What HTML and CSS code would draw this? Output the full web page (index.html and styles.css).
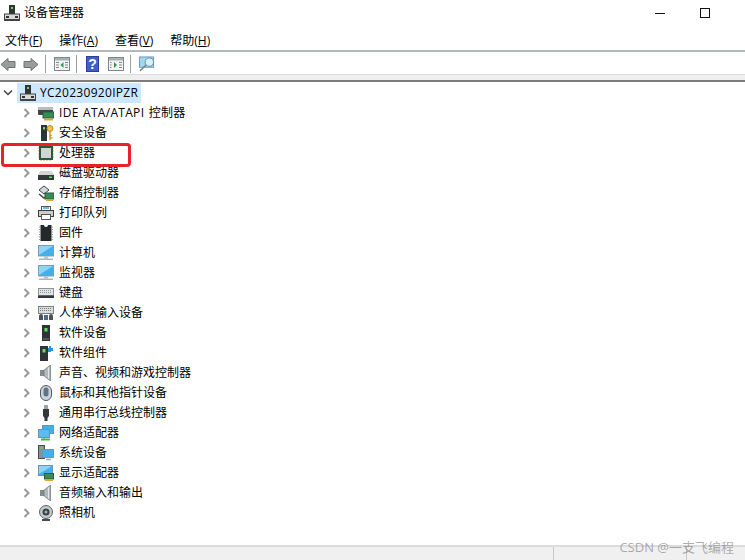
FILE: index.html
```html
<!DOCTYPE html>
<html lang="zh-CN">
<head>
<meta charset="utf-8">
<title>设备管理器</title>
<link rel="stylesheet" href="styles.css">
</head>
<body>
<svg class="defs" width="0" height="0">
  <defs>
    <symbol id="chev" viewBox="0 0 8 10"><path d="M1.500 1l4 4-4 4" fill="none" stroke="#9a9a9a" stroke-width="2"/></symbol>
    <symbol id="pc" viewBox="0 0 16 16"><rect x="5" y="0" width="6" height="9" fill="#2f3438"/><rect x="7" y="2" width="2" height="2" fill="#5fe05f"/><rect x="0.500" y="9" width="15" height="5.500" fill="#d8d8d8" stroke="#444"/><rect x="2" y="11" width="3" height="2" fill="#333"/><rect x="11" y="11" width="3" height="2" fill="#333"/><rect x="0" y="14.500" width="16" height="1.500" fill="#444"/></symbol>
    <symbol id="monitor" viewBox="0 0 16 16"><rect x="0.500" y="0.500" width="15" height="10.500" fill="#3fb1ee" stroke="#7d9db3"/><path d="M1 1h14L1 10z" fill="#8ed4f7"/><rect x="6" y="11" width="4" height="2.500" fill="#b9c4cc"/><rect x="1" y="13.500" width="14" height="1.500" fill="#aab5bd"/></symbol>
    <symbol id="speaker" viewBox="0 0 16 16"><rect x="2" y="5" width="5" height="6" fill="#858b8f"/><path d="M6 5L12.500 0v16L6 11z" fill="#b3b8bb" stroke="#6f757a" stroke-width=".7"/><path d="M10.500 2.500v11" stroke="#e4e6e7"/></symbol>
    <symbol id="tower" viewBox="0 0 16 16"><rect x="4" y="0" width="8" height="16" fill="#2e3337"/><rect x="6.500" y="3" width="3" height="3.500" fill="#5fe05f"/><rect x="5" y="13" width="6" height="2" fill="#555"/></symbol>
  </defs>
</svg>

<div class="window">
  <header class="titlebar">
    <svg class="icon"><use href="#pc"/></svg>
    <span class="title">设备管理器</span>
    <div class="winctl">
      <span class="minimize"></span>
      <span class="maximize"></span>
    </div>
  </header>

  <nav class="menubar">
    <span>文件(<u>F</u>)</span>
    <span>操作(<u>A</u>)</span>
    <span>查看(<u>V</u>)</span>
    <span>帮助(<u>H</u>)</span>
  </nav>

  <div class="toolbar">
    <svg class="tool arrow" viewBox="0 0 16 14"><path d="M8 1L1 7l7 6V10h7V4H8z" fill="#9b9d9d" stroke="#6f7272"/></svg>
    <svg class="tool arrow forward" viewBox="0 0 16 14"><path d="M8 1l7 6-7 6V10H1V4h7z" fill="#9b9d9d" stroke="#6f7272"/></svg>
    <span class="sep"></span>
    <svg class="tool" viewBox="0 0 16 14"><rect x=".5" y=".5" width="15" height="13" fill="#f4f4f4" stroke="#7d878e"/><rect x="1" y="1" width="14" height="2.500" fill="#a7b0b6"/><path d="M2 5.500h3M2 8h3M2 10.500h3M11 5.500h3M11 8h3M11 10.500h3" stroke="#7d878e"/><path d="M9.500 5v6l-3-3z" fill="#2d9a3e"/></svg>
    <span class="sep"></span>
    <svg class="tool help" viewBox="0 0 13 16"><rect width="13" height="16" fill="#26409c"/><rect x="1" y="1" width="11" height="14" fill="#3f5fc4"/><text x="6.500" y="13" text-anchor="middle" class="q">?</text></svg>
    <svg class="tool" viewBox="0 0 16 14"><rect x=".5" y=".5" width="15" height="13" fill="#f4f4f4" stroke="#7d878e"/><rect x="1" y="1" width="14" height="2.500" fill="#a7b0b6"/><path d="M2 5.500h1.500M2 8h1.500M2 10.500h1.500M11 5.500h3M11 8h3M11 10.500h3" stroke="#7d878e"/><path d="M6 5v6l3-3z" fill="#2d9a3e"/></svg>
    <span class="sep"></span>
    <svg class="tool scan" viewBox="0 0 17 16"><rect x=".5" y=".5" width="15" height="11" fill="#9fd8f5" stroke="#6a9ab8"/><circle cx="11" cy="6" r="4.500" fill="#d8f0fb" stroke="#6f8a98"/><path d="M7.500 9L1 15.500" stroke="#7a7f83" stroke-width="1.500"/></svg>
  </div>

  <div class="stripe"></div>

  <main class="tree">
    <div class="root">
      <svg class="root-chev" viewBox="0 0 10 8"><path d="M1 1.500l4 4 4-4" fill="none" stroke="#444" stroke-width="1.500"/></svg>
      <div class="root-label">
        <svg class="icon"><use href="#pc"/></svg>
        <span class="label latin">YC20230920IPZR</span>
      </div>
    </div>

    <div class="row"><svg class="chev"><use href="#chev"/></svg>
      <svg class="icon" viewBox="0 0 16 16"><rect x="0" y="2" width="15" height="8" rx="1" fill="#3f4447"/><rect x="0" y="2" width="15" height="3" fill="#b9bcbe"/><rect x="5" y="7" width="11" height="6" fill="#3b8a5a" stroke="#23613c"/><path d="M6 14.500h9" stroke="#e2a233" stroke-width="2"/></svg>
      <span class="label latin">IDE ATA/ATAPI 控制器</span></div>

    <div class="row"><svg class="chev"><use href="#chev"/></svg>
      <svg class="icon" viewBox="0 0 16 16"><rect x="3" y="0" width="6" height="16" fill="#2e3337"/><rect x="5" y="2" width="2" height="2.500" fill="#5fe05f"/><circle cx="12" cy="3.500" r="3" fill="#f2c350" stroke="#b98a22"/><path d="M12 6v9M12 13h2.500M12 10.500h2" stroke="#d49d2b" stroke-width="1.500"/></svg>
      <span class="label">安全设备</span></div>

    <div class="row"><svg class="chev"><use href="#chev"/></svg>
      <svg class="icon" viewBox="0 0 16 16"><rect x="1" y="1" width="14" height="14" fill="#235c40"/><path d="M0 3h1M0 6h1M0 9h1M0 12h1M15 3h1M15 6h1M15 9h1M15 12h1M3 0v1M6 0v1M9 0v1M12 0v1M3 15v1M6 15v1M9 15v1M12 15v1" stroke="#c9a24c"/><rect x="3" y="3" width="10" height="10" fill="#d2d6d3"/></svg>
      <span class="label">处理器</span></div>

    <div class="row"><svg class="chev"><use href="#chev"/></svg>
      <svg class="icon" viewBox="0 0 16 16"><path d="M2 6h12l2 4H0z" fill="#d5d5d5"/><rect x="0" y="10" width="16" height="5" fill="#33383b"/><rect x="11" y="11.500" width="3" height="1.500" fill="#5fe05f"/></svg>
      <span class="label">磁盘驱动器</span></div>

    <div class="row"><svg class="chev"><use href="#chev"/></svg>
      <svg class="icon" viewBox="0 0 16 16"><path d="M1 5l5-4 5 4-5 4z" fill="#d5d8da" stroke="#40464a"/><path d="M1 9l5 4 3-2" fill="none" stroke="#40464a" stroke-width="1.500"/><rect x="7" y="8" width="9" height="6" fill="#3b8a5a" stroke="#23613c"/><path d="M8 15h7" stroke="#e2a233" stroke-width="2"/></svg>
      <span class="label">存储控制器</span></div>

    <div class="row"><svg class="chev"><use href="#chev"/></svg>
      <svg class="icon" viewBox="0 0 16 16"><rect x="3.500" y="1.500" width="9" height="4" fill="#fff" stroke="#555"/><path d="M5 3h6" stroke="#3fa3e0" stroke-width="1.500"/><rect x="0.500" y="5.500" width="15" height="6" fill="#c9cccd" stroke="#3a3f42"/><rect x="3.500" y="9.500" width="9" height="5" fill="#fff" stroke="#555"/></svg>
      <span class="label">打印队列</span></div>

    <div class="row"><svg class="chev"><use href="#chev"/></svg>
      <svg class="icon" viewBox="0 0 16 16"><rect x="2.500" y="0" width="11" height="16" fill="#25282a"/><path d="M1 2h2M1 4.500h2M1 7h2M1 9.500h2M1 12h2M1 14.500h2M13 2h2M13 4.500h2M13 7h2M13 9.500h2M13 12h2M13 14.500h2" stroke="#8f9396"/><path d="M6 0a2 2 0 0 0 4 0z" fill="#fff"/></svg>
      <span class="label">固件</span></div>

    <div class="row"><svg class="chev"><use href="#chev"/></svg>
      <svg class="icon"><use href="#monitor"/></svg>
      <span class="label">计算机</span></div>

    <div class="row"><svg class="chev"><use href="#chev"/></svg>
      <svg class="icon"><use href="#monitor"/></svg>
      <span class="label">监视器</span></div>

    <div class="row"><svg class="chev"><use href="#chev"/></svg>
      <svg class="icon" viewBox="0 0 16 16"><rect x="0.500" y="3.500" width="15" height="7" fill="#e2e4e5" stroke="#8f9396"/><path d="M2 5.500h12M2 7.500h12" stroke="#8f9396" stroke-dasharray="1 1"/><rect x="0" y="10.500" width="16" height="2.500" fill="#33383b"/></svg>
      <span class="label">键盘</span></div>

    <div class="row"><svg class="chev"><use href="#chev"/></svg>
      <svg class="icon" viewBox="0 0 16 16"><rect x="0.500" y="1.500" width="15" height="7" fill="#d9dbdc" stroke="#7d8387"/><path d="M2 3.500h12M2 5.500h12" stroke="#7d8387" stroke-dasharray="1 1"/><path d="M1 15v-4a2 2 0 0 1 4 0v4zM11 15v-4a2 2 0 0 1 4 0v4z" fill="#4c5458"/><path d="M6 15v-5h4v5z" fill="#4f6d85"/></svg>
      <span class="label">人体学输入设备</span></div>

    <div class="row"><svg class="chev"><use href="#chev"/></svg>
      <svg class="icon"><use href="#tower"/></svg>
      <span class="label">软件设备</span></div>

    <div class="row"><svg class="chev"><use href="#chev"/></svg>
      <svg class="icon" viewBox="0 0 16 16"><rect x="2" y="1" width="8" height="15" fill="#2e3337"/><rect x="4.500" y="4" width="3" height="3.500" fill="#5fe05f"/><path d="M11 1h2v2h2v3h-2v1h-3V3h1z" fill="#2f8fd8"/></svg>
      <span class="label">软件组件</span></div>

    <div class="row"><svg class="chev"><use href="#chev"/></svg>
      <svg class="icon"><use href="#speaker"/></svg>
      <span class="label">声音、视频和游戏控制器</span></div>

    <div class="row"><svg class="chev"><use href="#chev"/></svg>
      <svg class="icon" viewBox="0 0 16 16"><rect x="2.500" y="0.500" width="11" height="15" rx="5.500" fill="#cdd3d8" stroke="#4d5c6b"/><rect x="5.500" y="2.500" width="5" height="9" rx="2.500" fill="#5c7488"/></svg>
      <span class="label">鼠标和其他指针设备</span></div>

    <div class="row"><svg class="chev"><use href="#chev"/></svg>
      <svg class="icon" viewBox="0 0 16 16"><rect x="6" y="0" width="4" height="4" fill="#9ea3a6"/><path d="M5 4h6v7l-1.500 2v3h-3v-3L5 11z" fill="#33383b"/></svg>
      <span class="label">通用串行总线控制器</span></div>

    <div class="row"><svg class="chev"><use href="#chev"/></svg>
      <svg class="icon" viewBox="0 0 16 16"><rect x="4.500" y="0.500" width="11" height="8" fill="#3fb1ee" stroke="#6f93a8"/><rect x="0.500" y="4.500" width="11" height="8" fill="#58bdf2" stroke="#6f93a8"/><path d="M3 14.500h9" stroke="#49b54f" stroke-width="2"/><path d="M6 12.500v1" stroke="#49b54f" stroke-width="2"/></svg>
      <span class="label">网络适配器</span></div>

    <div class="row"><svg class="chev"><use href="#chev"/></svg>
      <svg class="icon" viewBox="0 0 16 16"><rect x="0.500" y="0.500" width="6" height="13" fill="#8c9195" stroke="#4a4f52"/><path d="M2 3h3" stroke="#5fe05f"/><rect x="4.500" y="4.500" width="11" height="8" fill="#3fb1ee" stroke="#6f93a8"/><path d="M8 14.500h5" stroke="#9aa5ad" stroke-width="1.500"/></svg>
      <span class="label">系统设备</span></div>

    <div class="row"><svg class="chev"><use href="#chev"/></svg>
      <svg class="icon" viewBox="0 0 16 16"><rect x="0.500" y="0.500" width="14" height="10" fill="#3fb1ee" stroke="#6f93a8"/><path d="M1 1h13L1 9z" fill="#8ed4f7"/><rect x="6.500" y="8.500" width="9" height="5.500" fill="#3b8a5a" stroke="#23613c"/><path d="M7 15h8" stroke="#e2a233" stroke-width="2"/></svg>
      <span class="label">显示适配器</span></div>

    <div class="row"><svg class="chev"><use href="#chev"/></svg>
      <svg class="icon"><use href="#speaker"/></svg>
      <span class="label">音频输入和输出</span></div>

    <div class="row"><svg class="chev"><use href="#chev"/></svg>
      <svg class="icon" viewBox="0 0 16 16"><circle cx="8" cy="7" r="6.500" fill="#c5c9cb" stroke="#5d6367"/><circle cx="8" cy="7" r="3.500" fill="#3a3f43"/><circle cx="8" cy="7" r="1.500" fill="#9fb4c2"/><rect x="4" y="14" width="8" height="2" fill="#44494c"/></svg>
      <span class="label">照相机</span></div>
  </main>

  <footer class="statusbar">
    <span class="cell cell-main"></span>
    <span class="cell cell-mid"></span>
    <span class="cell"></span>
  </footer>

  <div class="highlight"></div>
  <div class="watermark">CSDN @一支飞编程</div>
</div>
</body>
</html>
```
FILE: styles.css
```css
* { box-sizing: border-box; }
html, body { margin: 0; padding: 0; }
body {
  width: 745px;
  height: 560px;
  overflow: hidden;
  background: #fff;
  color: #000;
  font-family: "Open Sans", "Noto Sans CJK SC", sans-serif;
  font-size: 12px;
}
.defs { position: absolute; }
.window {
  position: relative;
  width: 745px;
  height: 560px;
  display: flex;
  flex-direction: column;
}
.icon { width: 16px; height: 16px; flex: none; display: block; }

.titlebar {
  height: 26px;
  padding: 0 0 0 4px;
  display: flex;
  align-items: center;
  gap: 4px;
}
.titlebar .title { line-height: 16px; }
.winctl {
  margin-left: auto;
  display: flex;
  align-items: center;
  gap: 35px;
  padding-right: 35px;
}
.minimize { width: 10px; height: 1px; background: #111; }
.maximize { width: 10px; height: 10px; border: 1px solid #111; }

.menubar {
  height: 26px;
  padding: 6px 0 0 5px;
  display: flex;
  gap: 17px;
  align-items: center;
  border-bottom: 2px solid #b4b7bd;
  line-height: 16px;
}
.menubar span { white-space: nowrap; }

.toolbar {
  height: 22px;
  padding-top: 2px;
  display: flex;
  align-items: center;
  gap: 6px;
}
.tool { width: 16px; height: 14px; display: block; flex: none; }
.arrow { width: 16px; height: 15px; }
.forward { margin-left: 1px; }
.help { width: 13px; height: 16px; margin-left: 1px; margin-right: 3px; }
.scan { width: 16px; height: 16px; }
.sep { width: 1px; height: 18px; background: #a0a0a0; margin: 0 2px 0 0; flex: none; }

.stripe {
  height: 8px;
  background: #efefef;
  border-top: 1px solid #dcdcdc;
  border-bottom: 2px solid #7d7d7d;
}

.tree {
  flex: 1;
  padding-top: 1px;
}
.root, .row {
  height: 20px;
  display: flex;
  align-items: center;
  white-space: nowrap;
}
.label { line-height: 16px; }
.latin { letter-spacing: 0.3px; word-spacing: 1px; }
.root-chev { width: 10px; height: 8px; margin-left: 3px; flex: none; }
.root-label {
  margin-left: 4px;
  height: 20px;
  width: 124px;
  padding-left: 3px;
  display: flex;
  align-items: center;
  gap: 4px;
  background: #cce8ff;
}
.row { padding-left: 23px; }
.chev { width: 8px; height: 10px; flex: none; margin-right: 7px; }
.row .icon { margin-right: 5px; }

.statusbar {
  height: 15px;
  background: #f0f0f0;
  border-top: 2px solid #dcdcdc;
  display: flex;
}
.cell { display: block; }
.cell-main { width: 554px; border-right: 1px solid #c8c8c8; }
.cell-mid { width: 133px; border-right: 1px solid #c8c8c8; }

.highlight {
  position: absolute;
  left: 1px;
  top: 143px;
  width: 130px;
  height: 24px;
  border: 3px solid #e8212a;
  border-radius: 4px;
}
.watermark {
  position: absolute;
  right: 11px;
  top: 539px;
  font-size: 13px;
  line-height: 16px;
  color: rgba(120, 120, 120, 0.6);
}
.q { font-size: 14px; font-weight: 700; fill: #fff; font-family: "Liberation Sans", sans-serif; }
```
